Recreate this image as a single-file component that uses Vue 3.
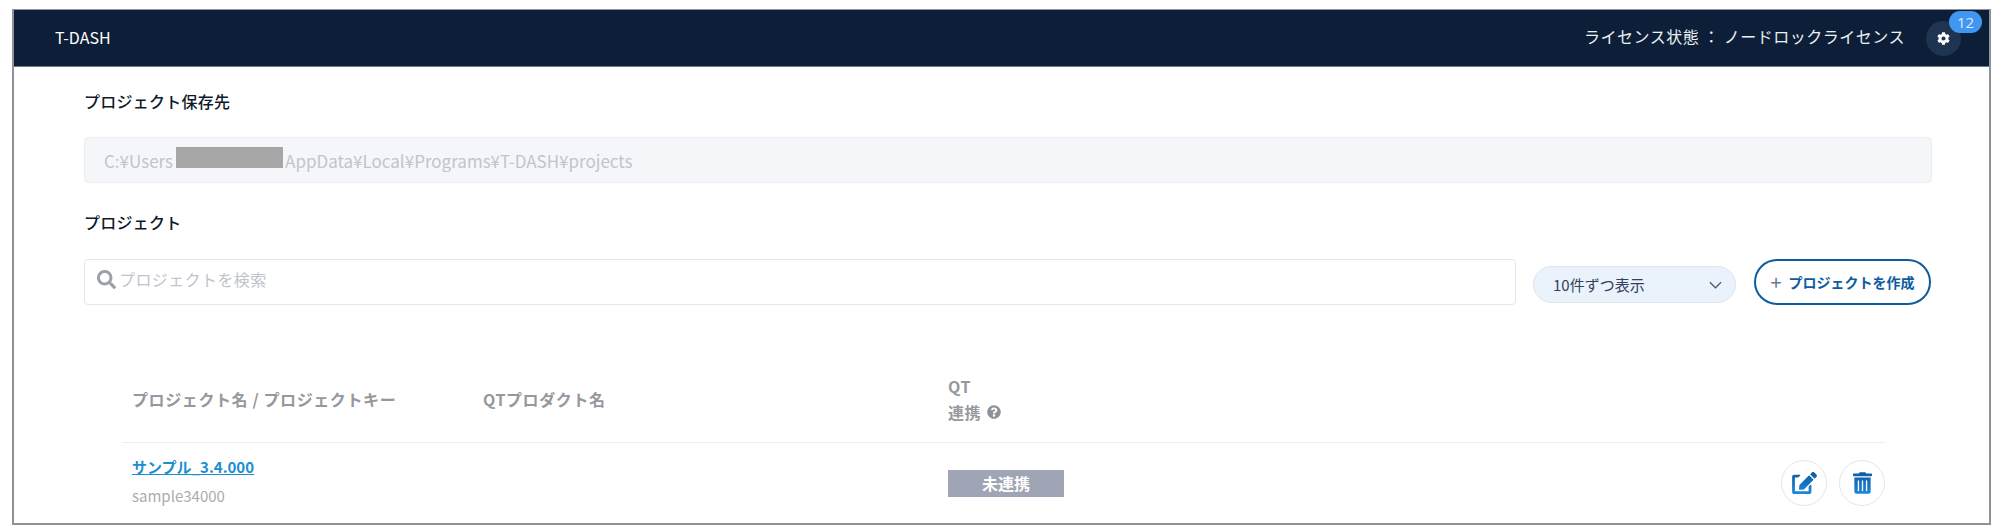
<template>
  <div class="frame">
    <header class="topbar">
      <span class="brand">T-DASH</span>
      <div class="topbar-right">
        <span class="license">ライセンス状態 ： ノードロックライセンス</span>
        <button class="gear-button">
          <svg class="gear" viewBox="0 0 512 512"><path d="M487.4 315.7l-42.6-24.6c4.3-23.2 4.3-47 0-70.2l42.6-24.6c4.9-2.8 7.1-8.6 5.5-14-11.1-35.6-30-67.8-54.7-94.6-3.8-4.1-10-5.1-14.8-2.3L380.8 110c-17.9-15.4-38.5-27.3-60.8-35.1V25.8c0-5.6-3.9-10.5-9.4-11.7-36.7-8.2-74.3-7.8-109.2 0-5.5 1.2-9.4 6.1-9.4 11.7V75c-22.2 7.9-42.8 19.8-60.8 35.1L88.7 85.5c-4.9-2.8-11-1.9-14.8 2.3-24.7 26.7-43.6 58.9-54.7 94.6-1.7 5.4.6 11.2 5.5 14L67.3 221c-4.3 23.2-4.3 47 0 70.2l-42.6 24.6c-4.9 2.8-7.1 8.6-5.5 14 11.1 35.6 30 67.8 54.7 94.6 3.8 4.1 10 5.1 14.8 2.3l42.6-24.6c17.9 15.4 38.5 27.3 60.8 35.1v49.2c0 5.6 3.9 10.5 9.4 11.7 36.7 8.2 74.3 7.8 109.2 0 5.5-1.2 9.4-6.1 9.4-11.7v-49.2c22.2-7.9 42.8-19.8 60.8-35.1l42.6 24.6c4.9 2.8 11 1.9 14.8-2.3 24.7-26.7 43.6-58.9 54.7-94.6 1.5-5.5-.7-11.3-5.6-14.1zM256 336c-44.1 0-80-35.9-80-80s35.9-80 80-80 80 35.9 80 80-35.9 80-80 80z" /></svg>
          <span class="badge">12</span>
        </button>
      </div>
    </header>

    <main class="content">
      <h2 class="section-title first">プロジェクト保存先</h2>
      <div class="path-box">C:¥Users<span class="redacted"></span>AppData¥Local¥Programs¥T-DASH¥projects</div>

      <h2 class="section-title second">プロジェクト</h2>
      <div class="toolbar">
        <div class="search">
          <svg class="search-icon" viewBox="0 0 512 512"><path d="M505 442.7L405.3 343c-4.5-4.5-10.6-7-17-7H372c27.6-35.3 44-79.7 44-128C416 93.1 322.9 0 208 0S0 93.1 0 208s93.1 208 208 208c48.3 0 92.7-16.4 128-44v16.3c0 6.4 2.5 12.5 7 17l99.7 99.7c9.4 9.4 24.6 9.4 33.9 0l28.3-28.3c9.4-9.4 9.4-24.6.1-34zM208 336c-70.7 0-128-57.2-128-128 0-70.7 57.2-128 128-128 70.7 0 128 57.2 128 128 0 70.7-57.2 128-128 128z" /></svg>
          <span>プロジェクトを検索</span>
        </div>
        <div class="page-select">
          <span>10件ずつ表示</span>
          <svg class="chevron" viewBox="0 0 14 8"><path d="M1 1l6 6 6-6" /></svg>
        </div>
        <button class="create-button"><span class="plus">+</span>プロジェクトを作成</button>
      </div>

      <div class="table">
        <div class="table-row table-head">
          <div>プロジェクト名 / プロジェクトキー</div>
          <div>QTプロダクト名</div>
          <div class="qt-head">
            <div>QT</div>
            <div class="qt-link">連携
              <svg class="help" viewBox="0 0 512 512"><path d="M504 256c0 136.997-111.043 248-248 248S8 392.997 8 256C8 119.083 119.043 8 256 8s248 111.083 248 248zM262.655 90c-54.497 0-89.255 22.957-116.549 63.758-3.536 5.286-2.353 12.415 2.715 16.258l34.699 26.31c5.205 3.947 12.621 3.008 16.665-2.122 17.864-22.658 30.113-35.797 57.303-35.797 20.429 0 45.698 13.148 45.698 32.958 0 14.976-12.363 22.667-32.534 33.976C247.128 238.528 216 254.941 216 296v4c0 6.627 5.373 12 12 12h56c6.627 0 12-5.373 12-12v-1.333c0-28.462 83.186-29.647 83.186-106.667 0-58.002-60.165-102-116.531-102zM256 338c-25.365 0-46 20.635-46 46 0 25.364 20.635 46 46 46s46-20.636 46-46c0-25.365-20.635-46-46-46z" /></svg>
            </div>
          </div>
          <div></div>
        </div>

        <div v-for="project in projects" :key="project.key" class="table-row table-body">
          <div>
            <a class="project-name">{{ project.name }}</a>
            <div class="project-key">{{ project.key }}</div>
          </div>
          <div>{{ project.product }}</div>
          <div><span class="status">{{ project.status }}</span></div>
          <div class="actions">
            <button class="round-button">
              <svg class="edit-icon" viewBox="0 0 576 512">
                <defs>
                  <linearGradient id="icon-blue" x1="0" y1="0" x2="0" y2="1">
                    <stop offset="0" stop-color="#0d5a9f" />
                    <stop offset="1" stop-color="#1c88dc" />
                  </linearGradient>
                </defs>
                <path fill="url(#icon-blue)" d="M402.6 83.2l90.2 90.2c3.8 3.8 3.8 10 0 13.8L274.4 405.6l-92.8 10.3c-12.4 1.4-22.9-9.1-21.5-21.5l10.3-92.8L388.8 83.2c3.8-3.8 10-3.8 13.8 0zm162-22.9l-48.8-48.8c-15.2-15.2-39.9-15.2-55.2 0l-35.4 35.4c-3.8 3.8-3.8 10 0 13.8l90.2 90.2c3.8 3.8 10 3.8 13.8 0l35.4-35.4c15.2-15.3 15.2-40 0-55.2zM384 346.2V448H64V128h73.1c3.2 0 6.2-1.3 8.5-3.5l40-40c7.6-7.6 2.2-20.5-8.5-20.5H48C21.5 64 0 85.5 0 112v352c0 26.5 21.5 48 48 48h352c26.5 0 48-21.5 48-48V306.2c0-10.7-12.9-16-20.5-8.5l-40 40c-2.2 2.3-3.5 5.3-3.5 8.5z" />
              </svg>
            </button>
            <button class="round-button">
              <svg class="trash-icon" viewBox="0 0 448 512">
                <path fill="url(#icon-blue)" d="M32 464a48 48 0 0 0 48 48h288a48 48 0 0 0 48-48V128H32zm272-256a16 16 0 0 1 32 0v224a16 16 0 0 1-32 0zm-96 0a16 16 0 0 1 32 0v224a16 16 0 0 1-32 0zm-96 0a16 16 0 0 1 32 0v224a16 16 0 0 1-32 0zM432 32H312l-9.4-18.7A24 24 0 0 0 281.1 0H166.8a23.72 23.72 0 0 0-21.4 13.3L136 32H16A16 16 0 0 0 0 48v32a16 16 0 0 0 16 16h416a16 16 0 0 0 16-16V48a16 16 0 0 0-16-16z" />
              </svg>
            </button>
          </div>
        </div>
      </div>
    </main>
  </div>
</template>

<script setup>
const projects = [
  { name: 'サンプル_3.4.000', key: 'sample34000', product: '', status: '未連携' },
]
</script>

<style>
html,
body {
  margin: 0;
  background: #fff;
}
</style>

<style scoped>
.frame {
  box-sizing: border-box;
  height: 516px;
  margin: 9px 4px 0 12px;
  border: 2px solid #8f9296;
  border-top-width: 1px;
  background: #fff;
  overflow: hidden;
  font-family: "Noto Sans CJK JP", "Open Sans", sans-serif;
}

.topbar {
  height: 57px;
  box-sizing: border-box;
  background: #0d1f38;
  border-bottom: 1px solid #6f7a88;
  display: flex;
  align-items: center;
  justify-content: space-between;
  padding: 0 6px 0 41px;
  color: #fff;
}

.brand {
  font-size: 16px;
  margin-bottom: 2px;
}

.topbar-right {
  display: flex;
  align-items: center;
  gap: 21px;
}

.license {
  font-size: 16px;
  letter-spacing: 0.5px;
  color: #eef1f4;
  margin-bottom: 4px;
}

.gear-button {
  position: relative;
  width: 35px;
  height: 35px;
  margin-right: 22px;
  border: none;
  border-radius: 50%;
  background: #1f3450;
  display: flex;
  align-items: center;
  justify-content: center;
  padding: 0;
}

.gear {
  width: 13px;
  height: 13px;
  fill: #fff;
}

.badge {
  position: absolute;
  top: -10px;
  right: -21px;
  width: 33px;
  height: 22px;
  border-radius: 11px;
  background: #3f97f2;
  color: #dbeafe;
  font-size: 15px;
  line-height: 22px;
  text-align: center;
  font-family: "Open Sans", sans-serif;
}

.content {
  padding: 0 57px 0 70px;
}

.section-title {
  margin: 0;
  font-size: 16px;
  letter-spacing: 0.25px;
  font-weight: 500;
  color: #0f1a2a;
  line-height: 20px;
}

.section-title.first {
  padding-top: 24px;
}

.section-title.second {
  padding-top: 29px;
}

.path-box {
  box-sizing: border-box;
  height: 46px;
  margin-top: 26px;
  padding-left: 19px;
  display: flex;
  align-items: center;
  background: #f5f6fa;
  border: 1px solid #eceef2;
  border-radius: 4px;
  font-size: 17px;
  color: #c0c4cc;
  white-space: pre;
}

.redacted {
  width: 107px;
  height: 21px;
  margin: 0 2px 6px 3px;
  background: #a6a6a6;
}

.toolbar {
  display: flex;
  align-items: flex-start;
  margin-top: 27px;
  height: 46px;
}

.search {
  box-sizing: border-box;
  width: 1432px;
  height: 46px;
  display: flex;
  align-items: center;
  gap: 3px;
  padding: 0 0 6px 12px;
  border: 1px solid #e4e6ea;
  border-radius: 4px;
  font-size: 16px;
  letter-spacing: 0.4px;
  color: #c0c4cc;
}

.search-icon {
  width: 19px;
  height: 19px;
  fill: #9aa0aa;
}

.page-select {
  box-sizing: border-box;
  width: 203px;
  height: 37px;
  margin: 7px 0 0 17px;
  padding: 0 13px 0 19px;
  display: flex;
  align-items: center;
  justify-content: space-between;
  background: #eaf2fb;
  border: 1px solid #dfe5ee;
  border-radius: 19px;
  font-size: 15px;
  color: #33415a;
}

.chevron {
  width: 13px;
  height: 8px;
  fill: none;
  stroke: #4a5a70;
  stroke-width: 1.3;
}

.create-button {
  box-sizing: border-box;
  width: 177px;
  height: 46px;
  margin-left: 18px;
  background: #fff;
  border: 2px solid #0d5c9e;
  border-radius: 23px;
  color: #0d5c9e;
  font-family: inherit;
  font-size: 14px;
  font-weight: 700;
  padding: 0;
  display: flex;
  align-items: center;
  justify-content: center;
  gap: 7px;
}

.plus {
  color: #6b7a8d;
  font-weight: 400;
  font-size: 20px;
  line-height: 1;
}

.table {
  margin: 54px 47px 0 38px;
}

.table-row {
  display: grid;
  grid-template-columns: 351px 465px 1fr 110px;
  padding-left: 10px;
}

.table-head {
  height: 84px;
  box-sizing: border-box;
  padding-bottom: 3px;
  align-items: center;
  font-size: 16px;
  font-weight: 700;
  letter-spacing: 0.6px;
  color: #96989d;
  border-bottom: 1px solid #eceef1;
}

.qt-head {
  line-height: 26px;
}

.qt-link {
  display: flex;
  align-items: center;
  gap: 6px;
}

.help {
  width: 14px;
  height: 14px;
  fill: #8f9298;
}

.table-body {
  padding-top: 12px;
  align-items: start;
}

.project-name {
  display: block;
  font-size: 15px;
  font-weight: 700;
  line-height: 24px;
  color: #1b8ed0;
  text-decoration: underline;
}

.project-key {
  font-size: 15px;
  line-height: 22px;
  margin-top: 6px;
  color: #a9acb1;
}

.status {
  display: block;
  width: 116px;
  height: 27px;
  margin-top: 15px;
  background: #9fa5b4;
  color: #fff;
  font-size: 16px;
  font-weight: 700;
  line-height: 26px;
  text-align: center;
}

.actions {
  display: flex;
  justify-content: flex-end;
  gap: 12px;
  margin-top: 5px;
}

.round-button {
  box-sizing: border-box;
  width: 46px;
  height: 46px;
  flex: none;
  padding: 0;
  background: #fff;
  border: 1px solid #e2e5ea;
  border-radius: 50%;
  display: flex;
  align-items: center;
  justify-content: center;
}

.edit-icon {
  width: 25px;
  height: 22px;
}

.trash-icon {
  width: 19px;
  height: 22px;
}
</style>
